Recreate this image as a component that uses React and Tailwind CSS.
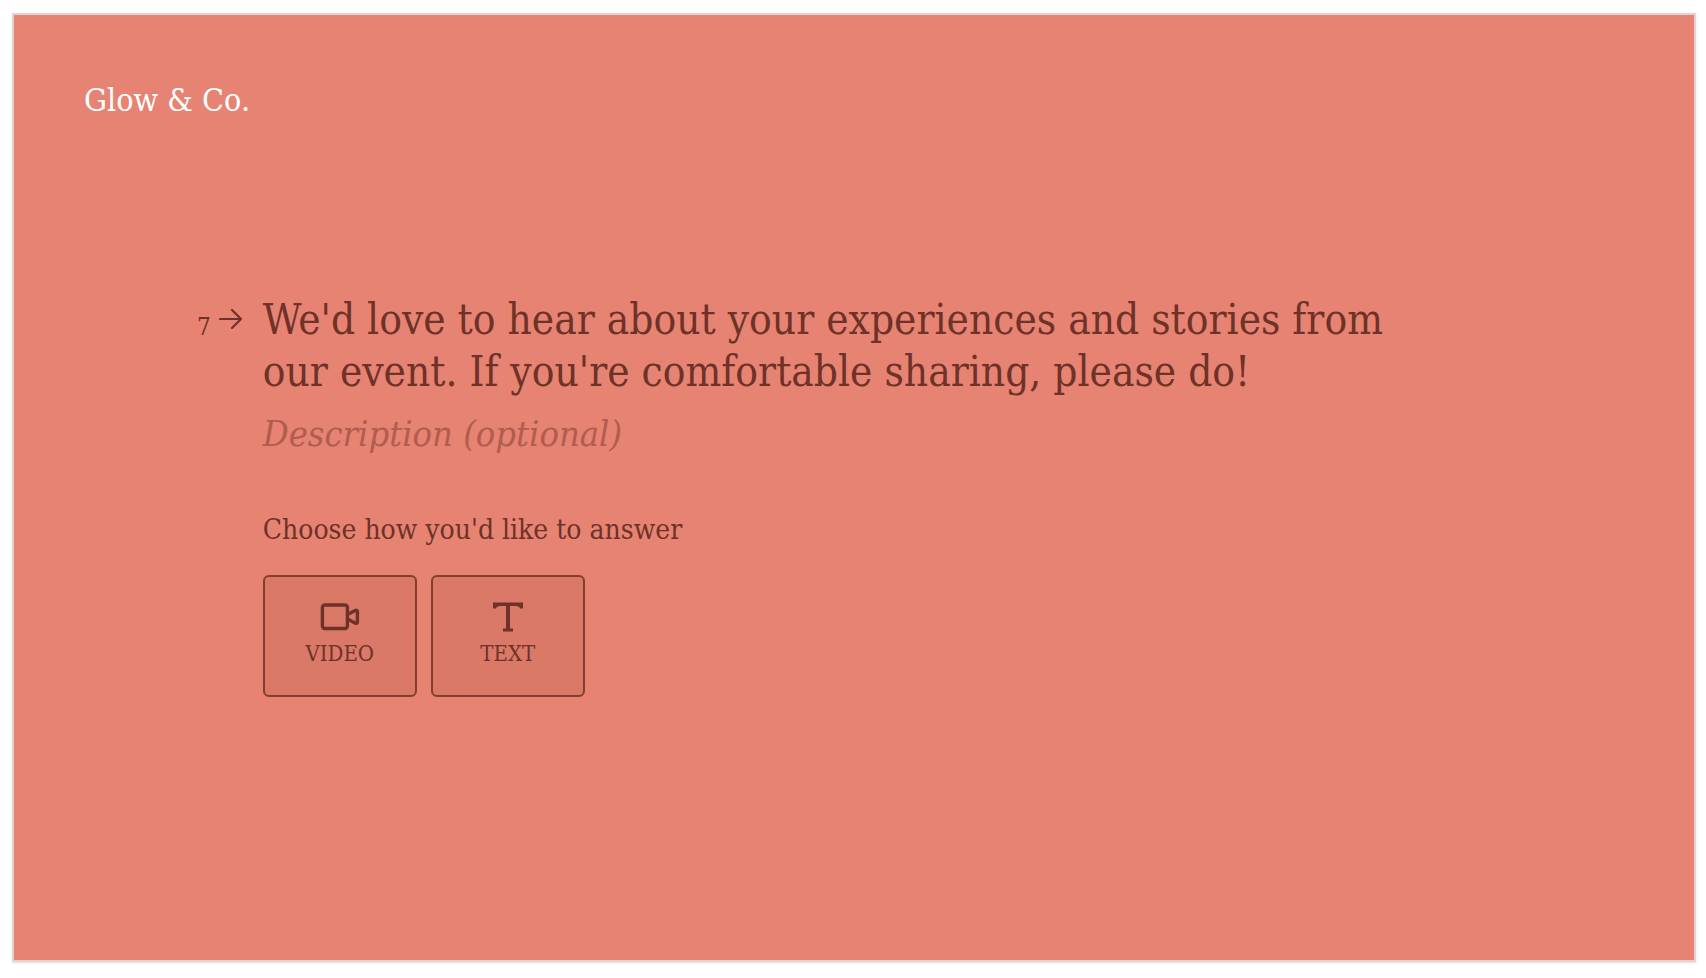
import { useState } from "react";

function ArrowIcon() {
  return (
    <svg viewBox="0 0 24 22" className="h-[22px] w-6 shrink-0" fill="none" stroke="currentColor" strokeWidth="2.2" strokeLinecap="round" strokeLinejoin="round" aria-hidden="true">
      <path d="M1 11h21M13 2l9 9-9 9" />
    </svg>
  );
}

function VideoIcon() {
  return (
    <svg viewBox="0 0 40 30" className="h-[30px] w-10" fill="none" stroke="currentColor" strokeWidth="3.4" strokeLinejoin="round" aria-hidden="true">
      <rect x="2.4" y="3" width="25" height="23.5" rx="2.5" />
      <path d="M27.4 12.5l7.8-4q2.200-.8 2.200 1.200v10.200q0 2-2.200 1.200l-7.800-4" />
    </svg>
  );
}

function TextIcon() {
  return (
    <svg viewBox="0 0 30 30" className="h-[30px] w-[30px]" fill="currentColor" aria-hidden="true">
      <path d="M0 .5h30v6h-3q0-2-4.500-2.500H17v22.500h3v3H10v-3h3V4H7.500Q3 4.500 3 6.500H0z" />
    </svg>
  );
}

const answers = [
  { id: "video", label: "VIDEO", Icon: VideoIcon },
  { id: "text", label: "TEXT", Icon: TextIcon },
];

function AnswerButton({ label, Icon, selected, onClick }) {
  return (
    <button
      type="button"
      aria-pressed={selected}
      onClick={onClick}
      className="flex h-[122px] w-[154px] cursor-pointer flex-col items-center gap-2 rounded-md border-2 border-[#81402f] bg-[#db7968] pt-[25px] text-[22px] leading-7"
    >
      <Icon />
      <span>{label}</span>
    </button>
  );
}

export default function App() {
  const [answer, setAnswer] = useState(null);

  return (
    <div className="min-h-screen bg-white pt-[13px] pr-[10px] pb-4 pl-3 font-['DejaVu_Serif_Condensed','DejaVu_Serif',serif] text-[#6e3228]">
      <main className="min-h-[949px] border-2 border-[#e2d3d1] bg-[#e78372] px-[70px] pt-[61px] shadow-sm">
        <header className="text-[32px] leading-[48px] text-white">Glow &amp; Co.</header>

        <section className="mt-[170px] flex gap-5 pl-[113px]">
          <div className="flex h-[50px] items-center gap-2 text-2xl">
            <span className="pt-4">7</span>
            <ArrowIcon />
          </div>

          <div className="max-w-[1180px]">
            <h1 className="text-[42px] leading-[52px]">
              We'd love to hear about your experiences and stories from our event. If you're comfortable sharing, please do!
            </h1>
            <p className="mt-4 text-[36px] leading-10 text-[#b05d4f] italic">Description (optional)</p>

            <h2 className="mt-[58px] text-[28px] leading-9">Choose how you'd like to answer</h2>
            <div className="mt-[27px] flex gap-[14px]">
              {answers.map((a) => (
                <AnswerButton
                  key={a.id}
                  label={a.label}
                  Icon={a.Icon}
                  selected={answer === a.id}
                  onClick={() => setAnswer(a.id)}
                />
              ))}
            </div>
          </div>
        </section>
      </main>
    </div>
  );
}
